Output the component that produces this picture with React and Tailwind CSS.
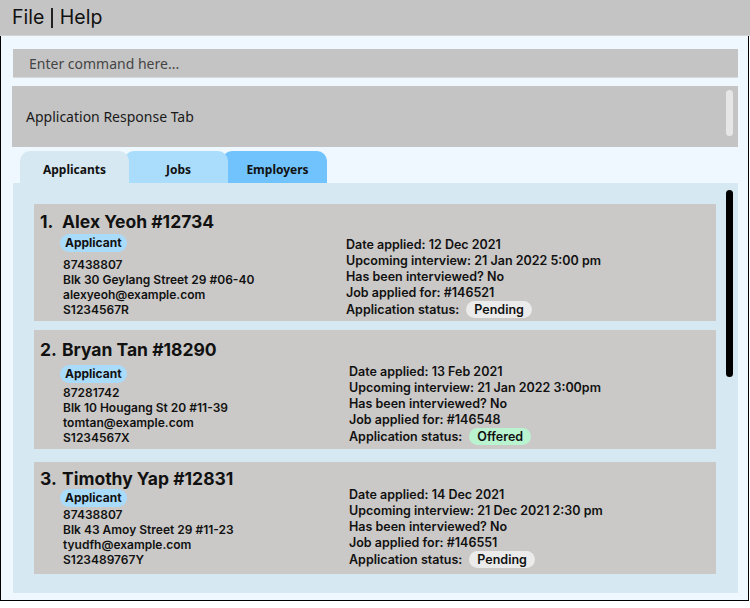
import React from "react";

const applicants = [
  {
    no: "1.",
    name: "Alex Yeoh #12734",
    phone: "87438807",
    address: "Blk 30 Geylang Street 29 #06-40",
    email: "alexyeoh@example.com",
    nric: "S1234567R",
    date: "12 Dec 2021",
    interview: "21 Jan 2022 5:00 pm",
    job: "#146521",
    status: "Pending",
    box: "pt-[8px] pb-[3px]",
    titleGap: "mb-[2px]",
    linesGap: "mt-[5px]",
    leftW: "w-[286px]",
    rightGap: "mt-[3px]",
  },
  {
    no: "2.",
    name: "Bryan Tan #18290",
    phone: "87281742",
    address: "Blk 10 Hougang St 20 #11-39",
    email: "tomtan@example.com",
    nric: "S1234567X",
    date: "13 Feb 2021",
    interview: "21 Jan 2022 3:00pm",
    job: "#146548",
    status: "Offered",
    box: "mt-[9px] pt-[10px] pb-[4px]",
    titleGap: "mb-[5px]",
    linesGap: "mt-[2px]",
    leftW: "w-[289px]",
    rightGap: "-mt-[1px]",
  },
  {
    no: "3.",
    name: "Timothy Yap #12831",
    phone: "87438807",
    address: "Blk 43 Amoy Street 29 #11-23",
    email: "tyudfh@example.com",
    nric: "S123489767Y",
    date: "14 Dec 2021",
    interview: "21 Dec 2021 2:30 pm",
    job: "#146551",
    status: "Pending",
    box: "mt-[13px] pt-[7px] pb-[6px]",
    titleGap: "mb-0",
    linesGap: "mt-0",
    leftW: "w-[289px]",
    rightGap: "-mt-[2px]",
  },
];

const StatusBadge = ({ status }) => (
  <span
    className={`ml-[7px] inline-block h-[17px] rounded-full px-[8px] leading-[17px] ${
      status === "Offered" ? "bg-[#b9f3cf]" : "bg-[#ebebeb]"
    }`}
  >
    {status}
  </span>
);

const ApplicantCard = ({ a }) => (
  <div className={`bg-[#cbc9c7] text-[#111] ${a.box}`}>
    {/* name row */}
    <div className={`flex items-center pl-[6px] text-[17.5px] font-bold leading-[20px] ${a.titleGap}`}>
      <span className="w-[22px]">{a.no}</span>
      <span>{a.name}</span>
    </div>
    <div className="flex items-start">
      <div className={`ml-[26px] ${a.leftW}`}>
        <div className="flex">
          <span className="h-[18px] rounded-full bg-[#a9dbfb] px-[5px] text-[12px] font-bold leading-[18px]">
            Applicant
          </span>
        </div>
        <div className={`ml-[3px] text-[12px] font-semibold leading-[15px] ${a.linesGap}`}>
          <p>{a.phone}</p>
          <p>{a.address}</p>
          <p>{a.email}</p>
          <p>{a.nric}</p>
        </div>
      </div>
      <div className={`text-[12.5px] font-semibold leading-[16px] ${a.rightGap}`}>
        <p>Date applied: {a.date}</p>
        <p>Upcoming interview: {a.interview}</p>
        <p>Has been interviewed? No</p>
        <p>Job applied for: {a.job}</p>
        <p className="flex items-center">
          Application status:
          <StatusBadge status={a.status} />
        </p>
      </div>
    </div>
  </div>
);

const tabs = [
  { label: "Applicants", cls: "bg-[#d6e8f2] z-30 w-[109px]" },
  { label: "Jobs", cls: "bg-[#aadcfc] z-20 w-[104px] -ml-[5px] pl-[5px]" },
  { label: "Employers", cls: "bg-[#70c3fc] z-10 w-[105px] -ml-[6px] pl-[6px]" },
];

export default function App() {
  return (
    <div className="h-[608px] w-[750px] overflow-hidden bg-white font-['Inter',sans-serif]">
      {/* menu bar */}
      <div className="flex h-[36px] items-center border-b border-[#d4d4d4] bg-[#c4c4c4] pl-[12px] text-[19.5px] text-[#111]">
        <span>File</span>
        <span className="mx-[7px] h-[20px] w-[1.5px] bg-[#222]"></span>
        <span>Help</span>
      </div>

      <div className="h-[565px] w-[749px] border-x border-b border-black bg-[#f0f8ff] pl-[12px] pr-[10px] pt-[13px]">
        {/* command box */}
        <div className="flex h-[29px] items-center border-b border-[#dadada] bg-[#c4c4c4] pl-[16px] font-['Noto_Sans',sans-serif] text-[14px] text-[#444]">
          Enter command here...
        </div>

        {/* response box */}
        <div className="relative -ml-[1px] mt-[8px] flex h-[61px] items-center bg-[#c4c4c4] pl-[14px] font-['Noto_Sans',sans-serif] text-[14px] text-[#1a1a1a]">
          Application Response Tab
          <div className="absolute right-[5px] top-[4px] h-[46px] w-[7px] rounded-full bg-[#e6e6e6]"></div>
        </div>

        {/* tabs */}
        <div className="ml-[7px] mt-[4px] flex h-[32px] font-['Noto_Sans',sans-serif] text-[12px] font-bold text-[#111]">
          {tabs.map((t) => (
            <div
              key={t.label}
              className={`relative flex items-center justify-center rounded-t-[10px] pt-[6px] ${t.cls}`}
            >
              {t.label}
            </div>
          ))}
        </div>

        {/* list pane */}
        <div className="relative h-[410px] overflow-hidden bg-[#d6e8f2] pl-[21px] pr-[22px] pt-[21px]">
          {applicants.map((a) => (
            <ApplicantCard key={a.name} a={a} />
          ))}
          <div className="absolute right-[5px] top-[7px] h-[187px] w-[7px] rounded-full bg-black"></div>
        </div>
      </div>
    </div>
  );
}
